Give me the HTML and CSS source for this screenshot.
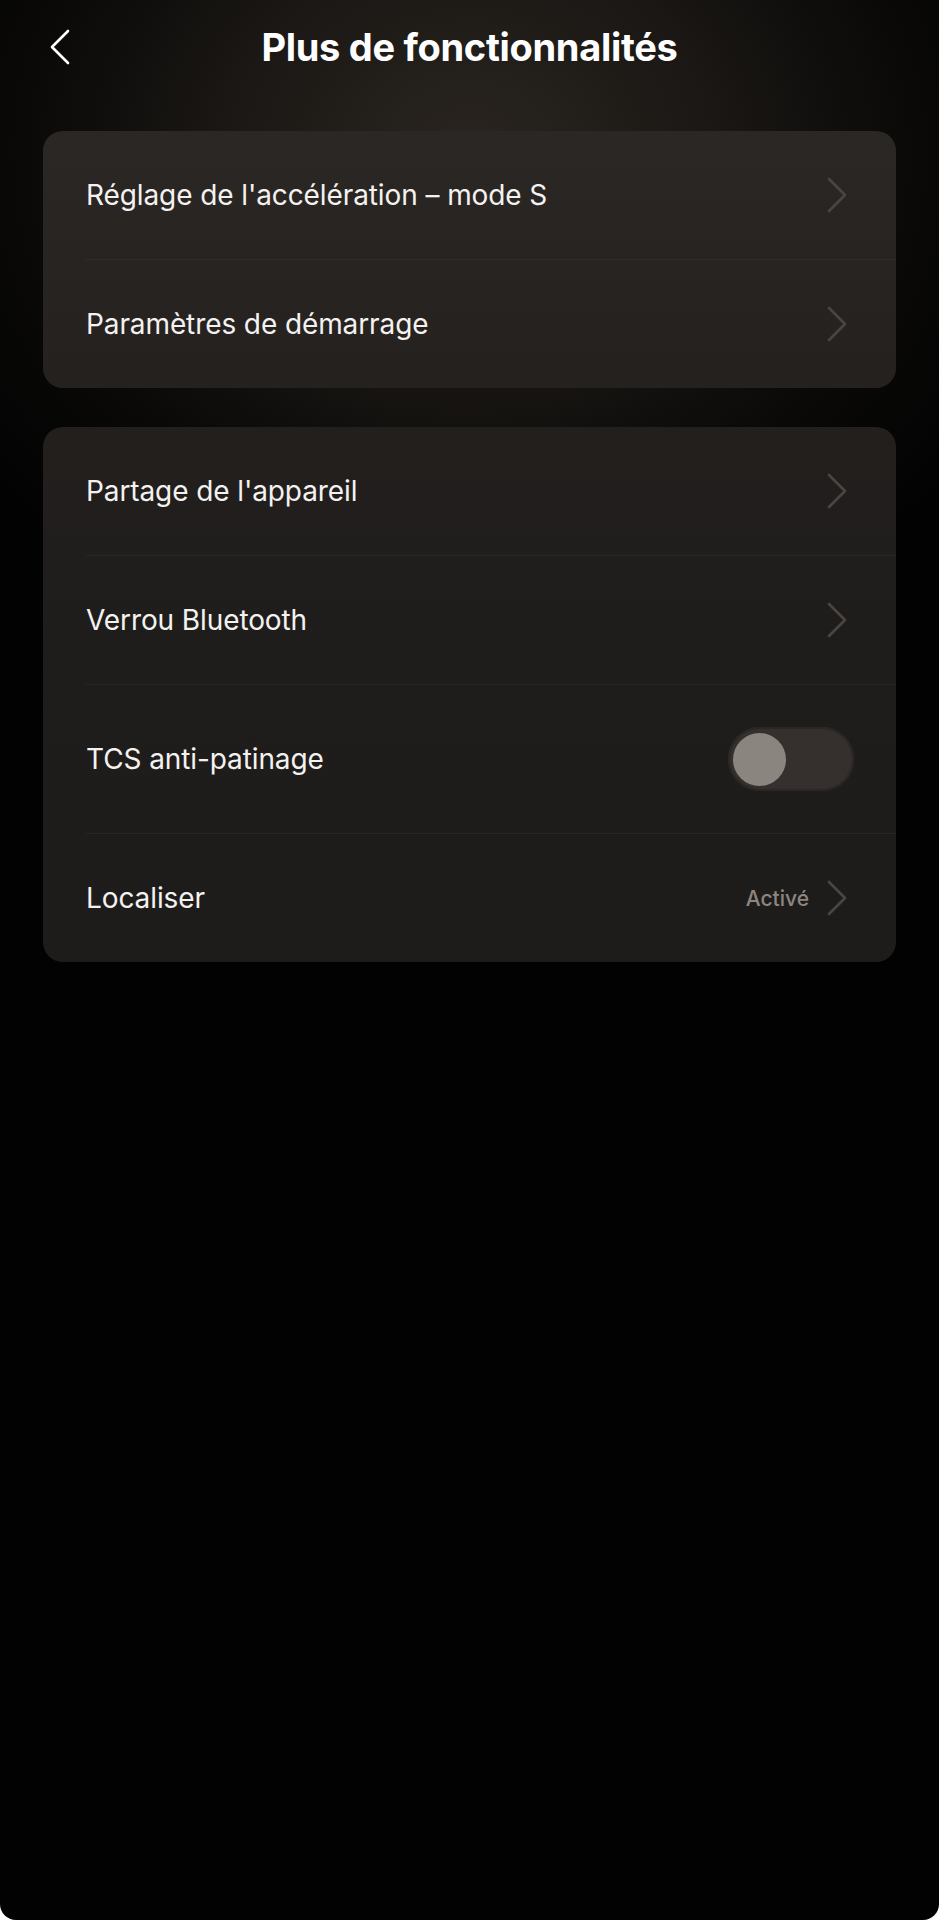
FILE: index.html
```html
<!DOCTYPE html>
<html lang="fr">
<head>
<meta charset="utf-8">
<title>Plus de fonctionnalités</title>
<link rel="stylesheet" href="styles.css">
</head>
<body>
<div class="screen">
  <header class="topbar">
    <div class="back">
      <svg class="back-icon" width="22" height="36" viewBox="0 0 22 36" aria-hidden="true">
        <path d="M19 2 L3 18 L19 34" fill="none" stroke="#ffffff" stroke-width="2.6" stroke-linecap="round" stroke-linejoin="round"/>
      </svg>
    </div>
    <h1 class="title">Plus de fonctionnalités</h1>
    <div></div>
  </header>

  <main class="content">
    <section class="card card-warm">
      <div class="row">
        <span class="label">Réglage de l'accélération – mode S</span>
        <svg class="chev" width="22" height="36" viewBox="0 0 22 36" aria-hidden="true"><path d="M3 2 L19 18 L3 34" fill="none" stroke-width="2.6" stroke-linecap="round" stroke-linejoin="round"/></svg>
      </div>
      <div class="row last">
        <span class="label">Paramètres de démarrage</span>
        <svg class="chev" width="22" height="36" viewBox="0 0 22 36" aria-hidden="true"><path d="M3 2 L19 18 L3 34" fill="none" stroke-width="2.6" stroke-linecap="round" stroke-linejoin="round"/></svg>
      </div>
    </section>

    <section class="card card-plain">
      <div class="row">
        <span class="label">Partage de l'appareil</span>
        <svg class="chev" width="22" height="36" viewBox="0 0 22 36" aria-hidden="true"><path d="M3 2 L19 18 L3 34" fill="none" stroke-width="2.6" stroke-linecap="round" stroke-linejoin="round"/></svg>
      </div>
      <div class="row">
        <span class="label">Verrou Bluetooth</span>
        <svg class="chev" width="22" height="36" viewBox="0 0 22 36" aria-hidden="true"><path d="M3 2 L19 18 L3 34" fill="none" stroke-width="2.6" stroke-linecap="round" stroke-linejoin="round"/></svg>
      </div>
      <div class="row row-toggle">
        <span class="label">TCS anti-patinage</span>
        <span class="toggle"><span class="knob"></span></span>
      </div>
      <div class="row last">
        <span class="label">Localiser</span>
        <span class="trail">
          <span class="value">Activé</span>
          <svg class="chev" width="22" height="36" viewBox="0 0 22 36" aria-hidden="true"><path d="M3 2 L19 18 L3 34" fill="none" stroke-width="2.6" stroke-linecap="round" stroke-linejoin="round"/></svg>
        </span>
      </div>
    </section>
  </main>
</div>
</body>
</html>
```

FILE: styles.css
```css
html {
  background: #ffffff;
}
body {
  margin: 0;
  font-family: Inter, "Noto Sans", "Liberation Sans", sans-serif;
  color: #ffffff;
}
.screen {
  width: 939px;
  min-height: 1920px;
  border-radius: 0 0 16px 16px;
  overflow: hidden;
  background:
    radial-gradient(ellipse 620px 520px at 50% 8%, #2a2520 0%, #1a1714 40%, #0a0908 72%, rgba(3,3,3,0) 100%),
    #020202;
}
.topbar {
  height: 94px;
  display: grid;
  grid-template-columns: 1fr auto 1fr;
  align-items: center;
}
.back {
  padding-left: 49px;
  display: flex;
  align-items: center;
}
.back-icon {
  display: block;
}
.title {
  margin: 0;
  font-size: 38px;
  font-weight: 700;
  letter-spacing: -0.3px;
  line-height: 1;
}
.content {
  padding: 37px 43px 0;
  display: flex;
  flex-direction: column;
  gap: 39px;
}
.card {
  border-radius: 20px;
  overflow: hidden;
}
.card-warm {
  background: linear-gradient(180deg, #2b2724 0%, #25211f 100%);
}
.card-plain {
  background: linear-gradient(180deg, #221f1d 0%, #1f1d1c 40%, #1e1c1b 100%);
}
.row {
  height: 128px;
  margin-left: 43px;
  padding-right: 48px;
  display: flex;
  align-items: center;
  justify-content: space-between;
  border-bottom: 1px solid rgba(255, 255, 255, 0.045);
}
.row.last {
  border-bottom: none;
}
.row-toggle {
  height: 148px;
  padding-right: 42px;
}
.label {
  font-size: 28px;
  font-weight: 400;
  color: #f4f2f0;
  letter-spacing: -0.1px;
}
.chev {
  display: block;
  stroke: #4a4541;
}
.trail {
  display: flex;
  align-items: center;
  gap: 17px;
}
.value {
  font-size: 21px;
  color: #8c8680;
  font-weight: 500;
}
.toggle {
  width: 126px;
  height: 64px;
  border-radius: 32px;
  background: #35302d;
  box-shadow: inset 0 0 0 2px #2b2724;
  display: flex;
  align-items: center;
  padding-left: 5px;
  box-sizing: border-box;
}
.knob {
  width: 53px;
  height: 53px;
  border-radius: 50%;
  background: #8a857e;
}
```
